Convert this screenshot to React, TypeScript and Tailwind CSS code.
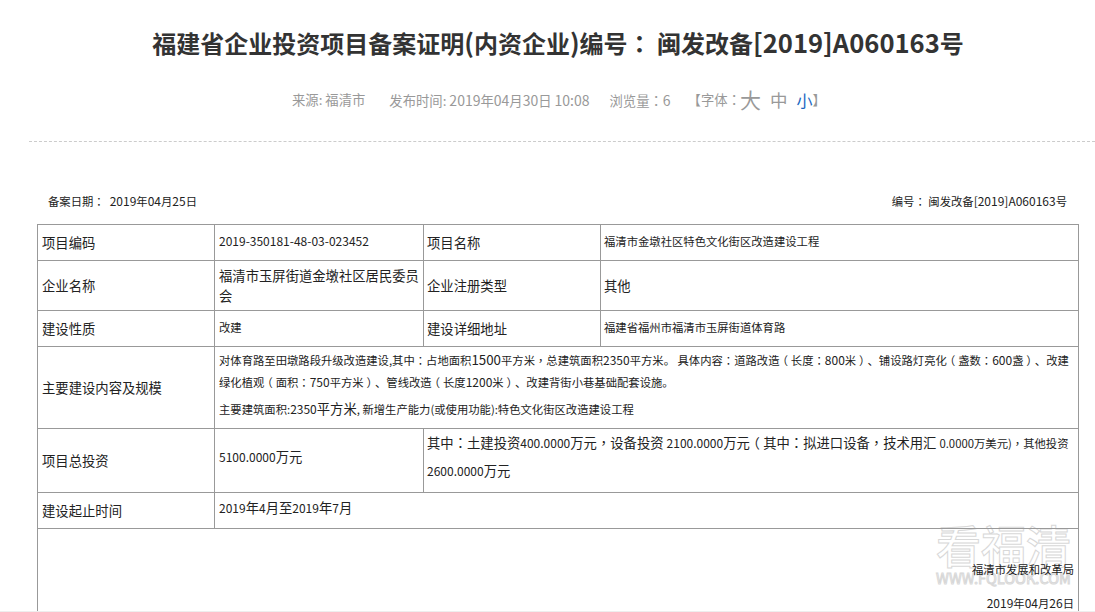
const label = 'border border-[#999] pl-[4px] pr-1 align-middle text-[13.33px]'
const label2 = 'border border-[#999] pl-[3px] pr-1 align-middle text-[13.33px]'
const value = 'border border-[#999] pl-[4px] pr-1 pb-[3px] align-middle'
const value2 = 'border border-[#999] pl-[3px] pr-1 pb-[3px] align-middle'

// digits and full-width punctuation sit differently from the CJK text around them
function T({ children, num }: { children: string; num: string }) {
  return (
    <>
      {children.split(/(\d[\d.]*|[：，（）])/).map((part, i) => {
        if (part === '：' || part === '，')
          return <span key={i} className="font-['Noto_Sans_CJK_TC',sans-serif]">{part}</span>
        if (part === '（') return <span key={i} className="inline-block -translate-x-[0.25em]">{part}</span>
        if (part === '）') return <span key={i} className="inline-block translate-x-[0.25em]">{part}</span>
        if (/^\d/.test(part)) return <span key={i} className={num}>{part}</span>
        return part
      })}
    </>
  )
}

export default function App() {
  return (
    <div className="relative h-[612px] w-[1095px] overflow-hidden bg-white font-['Noto_Sans_CJK_SC',sans-serif] text-[#222]">
      <h1 className="whitespace-nowrap pt-[24px] pl-[21px] text-center text-[24px] leading-[36px] font-bold text-[#333]">
        福建省企业投资项目备案证明<span className="text-[25.6px]">(</span>内资企业<span className="text-[25.6px]">)</span>编号
        <span className="font-['Noto_Sans_CJK_TC',sans-serif]">：</span> 闽发改备
        <span className="text-[25.6px]">[2019]A060163</span>号
      </h1>
      <div className="mt-[24px] flex h-[30px] items-center pl-[292px] text-[13.33px] text-[#999]">
        <span>来源: 福清市</span>
        <span className="ml-[24px]">
          发布时间: <T num="text-[14px]">2019年04月30日</T> <span className="text-[14px]">10:08</span>
        </span>
        <span className="ml-[20px]"><T num="text-[14px]">浏览量：6</T></span>
        <span className="ml-[17px]"><T num="text-[14px]">【字体：</T></span>
        <span className="ml-[-1px] text-[21px]">大</span>
        <span className="ml-[9px] text-[17.5px]">中</span>
        <span className="ml-[9px] text-[16px] text-[#1a66c0]">小</span>
        <span>】</span>
      </div>
      <div className="mt-[26px] ml-[29px] border-t border-dashed border-[#ccc]" />
      <div className="mt-[50px] flex justify-between pr-[28px] pl-[48px] text-[11.33px] leading-[18px]">
        <span>
          <T num="text-[12px]">备案日期：</T>
          <span className="ml-[5px]"><T num="text-[12px]">2019年04月25日</T></span>
        </span>
        <span>
          <T num="text-[12px]">编号： 闽发改备</T>
          <span className="text-[12px]">[2019]A060163</span>号
        </span>
      </div>

      {/* watermark, the table text is drawn over it */}
      <div className="absolute top-[520px] left-[935px] w-[137px] text-center text-white [-webkit-text-stroke:1px_#d8d8d8]">
        <div className="text-[45px] leading-[50px] font-medium">看福清</div>
        <div className="text-[14.6px] leading-[16px]">WWW.FQLOOK.COM</div>
      </div>

      <table className="relative z-10 mt-[14px] ml-[37px] w-[1041px] table-fixed border-collapse text-[11.33px]">
        <colgroup>
          <col className="w-[177px]" />
          <col className="w-[209px]" />
          <col className="w-[177px]" />
          <col className="w-[478px]" />
        </colgroup>
        <tbody>
          <tr className="h-[36px]">
            <td className={label}>项目编码</td>
            <td className={value + ' text-[12px]'}>2019-350181-48-03-023452</td>
            <td className={label2}>项目名称</td>
            <td className={value2}>福清市金墩社区特色文化街区改造建设工程</td>
          </tr>
          <tr className="h-[50px]">
            <td className={label}>企业名称</td>
            <td className="border border-[#999] pr-1 pl-[4px] align-middle text-[13.33px] leading-[20px]">福清市玉屏街道金墩社区居民委员会</td>
            <td className={label2}>企业注册类型</td>
            <td className="border border-[#999] pl-[3px] align-middle text-[13.33px]">其他</td>
          </tr>
          <tr className="h-[36px]">
            <td className={label}>建设性质</td>
            <td className={value}>改建</td>
            <td className={label2}>建设详细地址</td>
            <td className={value2}>福建省福州市福清市玉屏街道体育路</td>
          </tr>
          <tr className="h-[82px]">
            <td className={label}>主要建设内容及规模</td>
            <td colSpan={3} className="border border-[#999] pt-[2px] pl-[4px] align-top whitespace-nowrap">
              <p className="leading-[21px]">
                <T num="text-[13.33px]">对体育路至田墩路段升级改造建设,其中：占地面积1500</T>
                <T num="text-[12px]">平方米，总建筑面积2350平方米。 具体内容：道路改造（长度：800米）、铺设路灯亮化（盏数：600盏）、改建</T>
                <br />
                <T num="text-[12px]">绿化植观（面积：750平方米）、管线改造（长度1200米）、改建背街小巷基础配套设施。</T>
              </p>
              <p className="mt-[5px] leading-[21px]">
                主要建筑面积:<span className="text-[12px]">2350</span>
                <span className="text-[13.33px]">平方米</span>, 新增生产能力(或使用功能):特色文化街区改造建设工程
              </p>
            </td>
          </tr>
          <tr className="h-[64px]">
            <td className={label}>项目总投资</td>
            <td className="border border-[#999] pb-[8px] pl-[4px] align-middle text-[13.33px]">
              <T num="text-[12px]">5100.0000万元</T>
            </td>
            <td colSpan={2} className="border border-[#999] pl-[3px] align-top text-[13.33px] leading-[28px] whitespace-nowrap">
              <T num="text-[12px]">其中：土建投资400.0000万元，设备投资 2100.0000万元（其中：拟进口设备，技术用汇 </T>
              <span className="text-[11.33px]"><T num="text-[11.33px]">0.0000万美元)，其他投资</T></span>
              <br />
              <T num="text-[12px]">2600.0000万元</T>
            </td>
          </tr>
          <tr className="h-[36px]">
            <td className={label}>建设起止时间</td>
            <td colSpan={3} className="border border-[#999] pb-[6px] pl-[4px] align-middle text-[13.33px]">
              <T num="text-[12px]">2019年4月至2019年7月</T>
            </td>
          </tr>
          <tr>
            <td colSpan={4} className="border border-[#999] pt-[31px] pr-1 text-right align-top">
              <p className="leading-[18px]">福清市发展和改革局</p>
              <p className="mt-[16px] leading-[18px]"><T num="text-[12px]">2019年04月26日</T></p>
            </td>
          </tr>
        </tbody>
      </table>

      <div className="absolute right-0 bottom-0 left-0 z-20 h-px bg-[#eee]" />
    </div>
  )
}
